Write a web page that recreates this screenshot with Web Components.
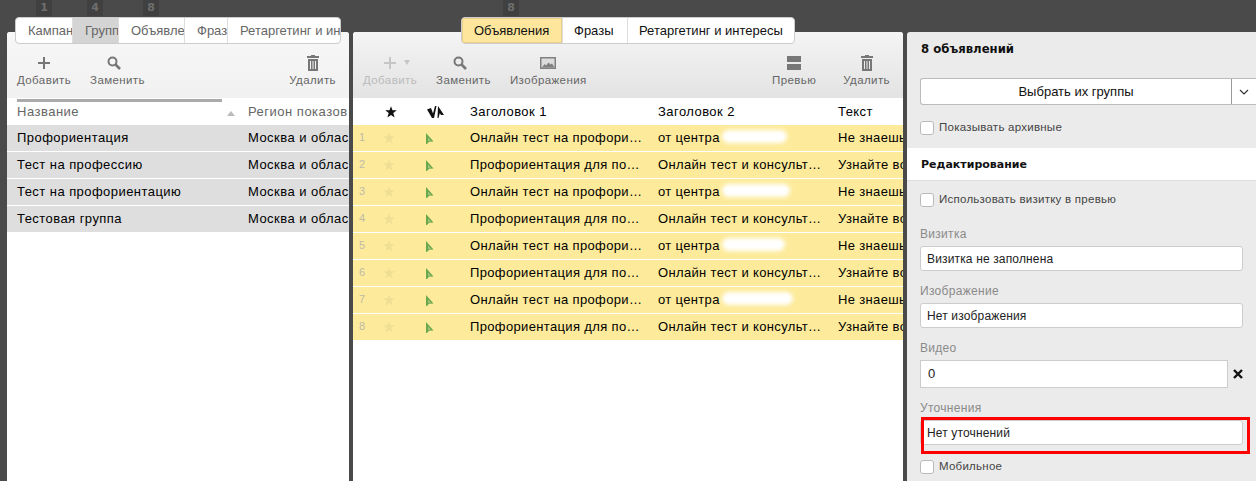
<!DOCTYPE html>
<html lang="ru">
<head>
<meta charset="utf-8">
<title>Группы</title>
<style>
  html, body { margin: 0; height: 100%; overflow: hidden; background: #4a4a4a; }
  body { font: 13px "Liberation Sans", Arial, sans-serif; color: #222; }
</style>
</head>
<body>
<app-layout>
  <app-column style="--col-width: 342px; --col-margin: 0 4px 0 7px">
    <tab-strip badges="1:21,4:35,8:40" pad="8" active="1" clip
      tabs="Кампан:56,Групп:46,Объявле:66,Фраз:43,Ретаргетинг и ин:113" slot="tabs"></tab-strip>
    <tool-bar kind="light">
      <tool-button icon="plus">Добавить</tool-button>
      <tool-button icon="search">Заменить</tool-button>
      <span style="flex:1"></span>
      <tool-button icon="trash">Удалить</tool-button>
    </tool-bar>
    <group-table></group-table>
  </app-column>
  <app-column style="--col-width: 550px; --col-margin: 0 4px 0 0">
    <tab-strip badges="8:42" pad="108" active="0"
      tabs="Объявления:100,Фразы:65,Ретаргетинг и интересы:167" slot="tabs"></tab-strip>
    <tool-bar kind="dark">
      <tool-button icon="plus-menu" disabled>Добавить</tool-button>
      <tool-button icon="search">Заменить</tool-button>
      <tool-button icon="image">Изображения</tool-button>
      <span style="flex:1"></span>
      <tool-button icon="preview" style="margin-right:8px">Превью</tool-button>
      <tool-button icon="trash">Удалить</tool-button>
    </tool-bar>
    <ad-table></ad-table>
  </app-column>
  <side-panel></side-panel>
</app-layout>

<script>
  // Иконки тулбара
  const PLUS = c => `<path d="M5 0h2v5h5v2H7v5H5V7H0V5h5z" fill="${c}"/>`;
  const ICONS = {
    plus: `<svg width="12" height="12" viewBox="0 0 12 12">${PLUS('#777')}</svg>`,
    'plus-menu': `<svg width="46" height="12" viewBox="-17 0 46 12">${PLUS('#c6c6c6')}<path d="M20 3h6l-3 5z" fill="#c6c6c6"/></svg>`,
    search: '<svg width="14" height="14" viewBox="0 0 14 14" style="margin-right:7px"><circle cx="5.500" cy="5.500" r="4" fill="none" stroke="#777" stroke-width="2"/><path d="M8.500 8.500l4.500 4.500" stroke="#777" stroke-width="2.600"/></svg>',
    trash: '<svg width="12" height="16" viewBox="0 0 12 16"><path d="M4 0h4v1h4v2H0V1h4zM1 4h10v12H1zM3 6v8h1V6zm2.500 0v8h1V6zM8 6v8h1V6z" fill="#777" fill-rule="evenodd"/></svg>',
    image: '<svg width="16" height="12" viewBox="0 0 16 12"><path d="M0 0h16v12H0z" fill="#808080"/><path d="M1.500 1.500h13v9h-13z" fill="#dcdcdc"/><path d="M2 10.500l2.500-3.500 1.500 1.500 2.500-3 2 2 1.500-1 2.500 4z" fill="#808080"/></svg>',
    preview: '<svg width="14" height="14" viewBox="0 0 14 14"><path d="M0 0h14v6H0zM0 8h14v6H0z" fill="#777"/></svg>'
  };
  const STAR = (color, size) => `<svg width="${size}" height="${size}" viewBox="0 0 12 12"><path d="M6 .3l1.500 4h4.300L8.300 7l1.300 4.500L6 8.900l-3.600 2.600L3.700 7 .2 4.300h4.300z" fill="${color}"/></svg>`;
  const FLAG = '<svg width="9" height="11" viewBox="0 0 9 11"><path d="M1 0l7.500 8.500-4.500.2L2 11H1z" fill="#6aa84f"/><path d="M3 4.500V8l3-.2z" fill="#a5c77a"/></svg>';
  const FLAG_HEAD = '<svg width="17" height="12" viewBox="0 0 17 12"><path d="M0 3.500L4 2l2 5.500L8 0h1.500L7 12H5z" fill="#111"/><path d="M11 0l6 9h-3l-1.200-1.700L11.500 12h-1z" fill="#111"/></svg>';

  class AppLayout extends HTMLElement {
    constructor() {
      super();
      this.attachShadow({ mode: 'open' }).innerHTML = `
        <style>:host { display: flex; align-items: stretch; height: 481px; overflow: hidden; }</style>
        <slot></slot>`;
    }
  }

  class AppColumn extends HTMLElement {
    constructor() {
      super();
      this.attachShadow({ mode: 'open' }).innerHTML = `
        <style>
          :host { display: flex; flex-direction: column; flex: none; width: var(--col-width); margin: var(--col-margin); min-width: 0; }
          .card { flex: 1; background: #fff; border-radius: 3px 3px 0 0; overflow: hidden; display: flex; flex-direction: column; }
        </style>
        <slot name="tabs"></slot>
        <div class="card"><slot></slot></div>`;
    }
  }

  class TabStrip extends HTMLElement {
    constructor() {
      super();
      this.attachShadow({ mode: 'open' });
    }
    connectedCallback() {
      const active = +this.getAttribute('active');
      const pad = this.getAttribute('pad');
      const tabs = this.getAttribute('tabs').split(',').map((t, i) => {
        const [label, w] = t.split(':');
        return `<div class="tab ${i === active ? 'on' : ''}" style="width:${w}px">${label}</div>`;
      }).join('');
      const badges = this.getAttribute('badges').split(',').map(b => {
        const [n, left] = b.split(':');
        return `<b style="margin-left:${left}px">${n}</b>`;
      }).join('');
      this.shadowRoot.innerHTML = `
        <style>
          :host { display: block; height: 32px; position: relative; z-index: 1; padding-left: ${pad}px; box-sizing: border-box; }
          .badges { display: flex; height: 17px; }
          b { width: 16px; height: 16px; background: #404040; color: #6e6e6e; font: bold 11px/16px "DejaVu Sans", sans-serif; text-align: center; }
          .tabs { display: inline-flex; background: #fff; border: 1px solid #ccc; border-radius: 4px; height: 25px; color: #111; font-size: 13px; }
          .tab { box-sizing: border-box; padding-left: 11px; line-height: 25px; border-left: 1px solid #ddd; white-space: nowrap; overflow: hidden; flex: none; }
          .tab:first-child { border-left: 0; border-radius: 3px 0 0 3px; padding-left: 12px; }
          .tab.on { background: #fee69c; }
          .tab.on:first-child { box-shadow: inset 0 0 0 1px #ead08a; }
          :host([clip]) .tabs { color: #666; }
          :host([clip]) .tab { padding-left: 12px; }
          :host([clip]) .tab.on { background: #d4d4d4; }
        </style>
        <div class="badges">${badges}</div>
        <div class="tabs">${tabs}</div>`;
    }
  }

  class ToolBar extends HTMLElement {
    constructor() {
      super();
      this.attachShadow({ mode: 'open' }).innerHTML = `
        <style>
          :host { display: flex; flex: none; height: 66px; box-sizing: border-box; padding: 21px 13px 0 10px; gap: 19px; }
          :host([kind=light]) { background: linear-gradient(#f7f7f7, #f1f1f1); }
          :host([kind=dark]) { background: linear-gradient(#f4f4f4, #e3e3e3); }
        </style>
        <slot></slot>`;
    }
  }

  class ToolButton extends HTMLElement {
    constructor() {
      super();
      this.attachShadow({ mode: 'open' });
    }
    connectedCallback() {
      this.shadowRoot.innerHTML = `
        <style>
          :host { display: flex; flex-direction: column; align-items: center; color: #666; font-size: 11.500px; line-height: 14px; letter-spacing: .4px; }
          :host([disabled]) { color: #bbb; }
          .icon { height: 20px; display: flex; align-items: center; justify-content: center; }
        </style>
        <div class="icon">${ICONS[this.getAttribute('icon')]}</div>
        <slot></slot>`;
    }
  }

  class GroupTable extends HTMLElement {
    constructor() {
      super();
      const names = ['Профориентация', 'Тест на профессию', 'Тест на профориентацию', 'Тестовая группа'];
      const rows = names.map(n => `<div class="row"><span class="name">${n}</span><span class="region">Москва и облас</span></div>`).join('');
      this.attachShadow({ mode: 'open' }).innerHTML = `
        <style>
          :host { display: block; flex: 1; font-size: 13px; letter-spacing: .45px; }
          .head { position: relative; display: flex; height: 27px; line-height: 27px; color: #666; padding-left: 10px; overflow: hidden; letter-spacing: .5px; }
          .head::before { content: ''; position: absolute; left: 10px; top: 1px; width: 205px; height: 3px; background: #aaa; }
          .name { width: 231px; flex: none; }
          .sort { position: absolute; left: 220px; top: 13px; border: 4px solid transparent; border-top: 0; border-bottom: 5px solid #bbb; }
          .region { white-space: nowrap; }
          .row { display: flex; height: 26px; line-height: 25px; background: #dedede; margin-bottom: 1px; padding-left: 10px; color: #000; overflow: hidden; }
        </style>
        <div class="head"><span class="name">Название</span><i class="sort"></i><span class="region">Регион показов</span></div>
        ${rows}`;
    }
  }

  class AdTable extends HTMLElement {
    constructor() {
      super();
      const texts = [
        ['Онлайн тест на профори…', 'от центра', 'Не знаешь'],
        ['Профориентация для по…', 'Онлайн тест и консульт…', 'Узнайте во']
      ];
      const blurs = [65, 68, 63, 71];
      let rows = '';
      for (let i = 0; i < 8; i++) {
        const t = texts[i % 2];
        const blur = i % 2 ? '' : `<i class="blur" style="width:${blurs[i / 2]}px"></i>`;
        rows += `<div class="row"><span class="num">${i + 1}</span><span class="star">${STAR('#efdf95', 12)}</span><span class="flag">${FLAG}</span><span class="h1">${t[0]}</span><span class="h2">${t[1]}${blur}</span><span class="txt">${t[2]}</span></div>`;
      }
      this.attachShadow({ mode: 'open' }).innerHTML = `
        <style>
          :host { display: block; flex: 1; font-size: 13px; color: #000; letter-spacing: .35px; }
          .row, .head { display: flex; white-space: nowrap; overflow: hidden; }
          .head { height: 27px; line-height: 27px; letter-spacing: .45px; }
          .row { height: 26px; line-height: 25px; background: #fdeb9b; margin-bottom: 1px; }
          .num { width: 30px; flex: none; padding-left: 6px; box-sizing: border-box; color: #bdbaa8; font-size: 11px; letter-spacing: 0; }
          .star { width: 42px; flex: none; display: flex; align-items: center; }
          .head .star { padding-left: 2px; width: 40px; }
          .flag { width: 45px; flex: none; display: flex; align-items: center; }
          .head .flag { margin-left: 2px; width: 43px; }
          .h1 { width: 188px; flex: none; }
          .h2 { width: 180px; flex: none; position: relative; }
          .blur { display: inline-block; height: 13px; background: #fff; border-radius: 7px; filter: blur(2px); position: absolute; top: 5px; left: 64px; }
        </style>
        <div class="head"><span class="num"></span><span class="star">${STAR('#111', 12)}</span><span class="flag">${FLAG_HEAD}</span><span class="h1">Заголовок 1</span><span class="h2">Заголовок 2</span><span class="txt">Текст</span></div>
        ${rows}`;
    }
  }

  class CheckRow extends HTMLElement {
    constructor() {
      super();
      this.attachShadow({ mode: 'open' }).innerHTML = `
        <style>
          :host { display: flex; align-items: center; gap: 5px; font-size: 11.500px; color: #444; height: 14px; letter-spacing: .25px; }
          i { width: 14px; height: 14px; box-sizing: border-box; background: #fff; border: 1px solid #bbb; border-radius: 3px; flex: none; }
          slot { display: block; margin-top: -2px; }
        </style>
        <i></i><slot></slot>`;
    }
  }

  class FormField extends HTMLElement {
    constructor() {
      super();
      this.attachShadow({ mode: 'open' });
    }
    connectedCallback() {
      const video = this.hasAttribute('video');
      this.shadowRoot.innerHTML = `
        <style>
          :host { display: block; position: relative; margin: 0 13px; }
          label { display: block; color: #8a8a8a; font-size: 12px; line-height: 14px; height: 19px; letter-spacing: .3px; }
          .line { display: flex; align-items: center; }
          .box { flex: 1; height: 25px; box-sizing: border-box; border: 1px solid #ccc; border-radius: 3px; background: #fff; padding-left: 6px; font-size: 12px; line-height: 25px; color: #222; letter-spacing: .15px; }
          :host([video]) .box { height: 28px; border-radius: 0; line-height: 26px; padding-left: 7px; font-size: 13px; flex: none; width: 308px; }
          .x { margin-left: 5px; width: 10px; height: 10px; }
          :host([mark])::after { content: ''; position: absolute; left: 1px; right: -7px; top: 16px; height: 37px; border: 3px solid #f00; box-sizing: border-box; }
        </style>
        <label>${this.getAttribute('label')}</label>
        <div class="line"><div class="box"><slot></slot></div>${video ? '<svg class="x" viewBox="0 0 10 10"><path d="M1 1l8 8M9 1l-8 8" stroke="#111" stroke-width="2.400"/></svg>' : ''}</div>`;
    }
  }

  class SidePanel extends HTMLElement {
    constructor() {
      super();
      this.attachShadow({ mode: 'open' }).innerHTML = `
        <style>
          :host { display: block; flex: 1; margin-top: 32px; background: #ebebeb; border-radius: 3px 0 0 0; overflow: hidden; font-size: 12px; color: #111; min-width: 0; }
          .title { font: bold 11.700px/14px "DejaVu Sans", sans-serif; padding: 10px 14px 0; height: 38px; box-sizing: border-box; }
          .pick { display: flex; height: 27px; margin: 8px 0 0 13px; background: #fff; border: 1px solid #bbb; border-right: 0; border-radius: 3px 0 0 3px; box-sizing: border-box; line-height: 25px; font-size: 13px; }
          .pick span { flex: 1; text-align: center; }
          .pick i { width: 24px; border-left: 1px solid #999; display: flex; align-items: center; justify-content: center; }
          check-row { margin-left: 13px; }
          .band { background: #fff; border-bottom: 1px solid #ddd; height: 33px; box-sizing: border-box; margin-top: 13px; padding: 10px 14px 0; font: bold 11px/14px "DejaVu Sans", sans-serif; }
        </style>
        <div class="title">8 объявлений</div>
        <div class="pick"><span>Выбрать их группы</span><i><svg width="10" height="6" viewBox="0 0 10 6"><path d="M1 1l4 4 4-4" fill="none" stroke="#333" stroke-width="1.200"/></svg></i></div>
        <check-row style="margin-top:16px">Показывать архивные</check-row>
        <div class="band">Редактирование</div>
        <check-row style="margin-top:12px">Использовать визитку в превью</check-row>
        <form-field label="Визитка" style="margin-top:20px">Визитка не заполнена</form-field>
        <form-field label="Изображение" style="margin-top:13px">Нет изображения</form-field>
        <form-field label="Видео" style="margin-top:13px" video>0</form-field>
        <form-field label="Уточнения" style="margin-top:13px" mark>Нет уточнений</form-field>
        <check-row style="margin-top:15px">Мобильное</check-row>`;
    }
  }

  customElements.define('app-layout', AppLayout);
  customElements.define('app-column', AppColumn);
  customElements.define('tab-strip', TabStrip);
  customElements.define('tool-bar', ToolBar);
  customElements.define('tool-button', ToolButton);
  customElements.define('group-table', GroupTable);
  customElements.define('ad-table', AdTable);
  customElements.define('check-row', CheckRow);
  customElements.define('form-field', FormField);
  customElements.define('side-panel', SidePanel);
</script>
</body>
</html>
